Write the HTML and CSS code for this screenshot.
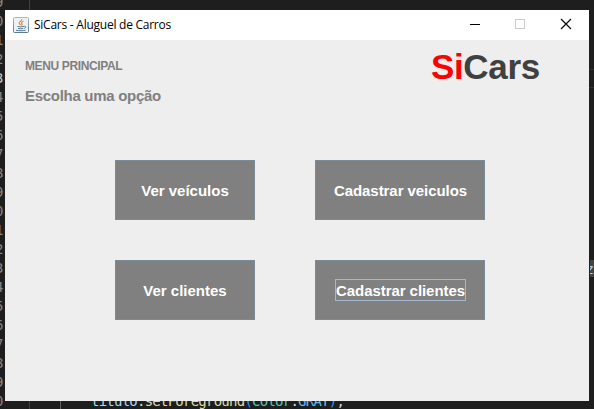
FILE: index.html
```html
<!DOCTYPE html>
<html lang="pt-BR">
<head>
<meta charset="utf-8">
<title>SiCars - Aluguel de Carros</title>
<link rel="stylesheet" href="styles.css">
</head>
<body>
<div class="desktop">
  <div class="gutter">
    <span>9</span><span>0</span><span>1</span><span>2</span><span class="current">3</span><span>4</span><span>5</span><span>6</span><span>7</span><span>8</span><span>9</span><span>0</span><span>1</span><span>2</span><span>3</span><span>4</span><span>5</span><span>6</span><span>7</span><span>8</span><span>9</span><span>0</span>
  </div>
  <div class="guide guide-outer"></div>
  <div class="guide guide-inner"></div>
  <div class="code"><span class="var">titulo</span>.<span class="fn">setForeground</span><span class="paren">(</span><span class="type">Color</span>.<span class="const">GRAY</span><span class="paren">)</span>;</div>
  <div class="active-line"></div>
  <div class="fragment">iz</div>

  <main class="window">
    <header class="titlebar">
      <svg class="app-icon" width="16" height="16" viewBox="0 0 16 16">
        <defs><linearGradient id="tile" x1="0" y1="0" x2="0" y2="1"><stop offset="0" stop-color="#a9b7c3"/><stop offset="1" stop-color="#5b7b94"/></linearGradient></defs>
        <rect x=".5" y=".5" width="15" height="15" rx="1" fill="#eef1f3" stroke="url(#tile)"/>
        <path d="M8.800 2c.6 2-3.300 2.300-2.600 4.300.3.800 1.200 1.200 1.600 2M10.500 4.200C8 5.200 8.300 6.200 9 7c.4.600.1 1.100-.5 1.500" fill="none" stroke="#ed8b36" stroke-width="1.200"/>
        <path d="M4.500 9.500c2 .5 4.500.5 6.500 0M5 11.500c2 .4 3.500.4 5.300 0M3 13.300c3 .6 7 .5 9.500 0M11.200 9.200c2.300-.5 2.200 1.700 0 2.200" fill="none" stroke="#527e9d" stroke-width="1"/>
      </svg>
      <span class="caption">SiCars - Aluguel de Carros</span>
      <svg class="controls" width="138" height="30" viewBox="0 0 138 30" fill="none" shape-rendering="crispEdges">
        <path d="M19 14.500h10" stroke="#000"/>
        <rect x="64.500" y="9.500" width="9" height="9" stroke="#ccc"/>
        <path d="M110 9l10 10M120 9l-10 10" stroke="#000" stroke-width="1.100" shape-rendering="auto"/>
      </svg>
    </header>
    <div class="content">
      <div class="top">
        <div class="headings">
          <h2>MENU PRINCIPAL</h2>
          <p>Escolha uma opção</p>
        </div>
        <h1><span>Si</span>Cars</h1>
      </div>
      <div class="menu">
        <button>Ver veículos</button>
        <button class="wide">Cadastrar veiculos</button>
        <button>Ver clientes</button>
        <button class="wide"><span class="focused">Cadastrar clientes</span></button>
      </div>
    </div>
  </main>
</div>
</body>
</html>
```

FILE: styles.css
```css
* { box-sizing: border-box; }
body { margin: 0; overflow: hidden; }
.desktop {
  position: relative;
  width: 594px;
  height: 409px;
  padding: 10px 5px 8px;
  overflow: hidden;
  background: #1e1e1e;
  color: #d4d4d4;
  font: 14px/19px "DejaVu Sans Mono", monospace;
}
.gutter {
  position: absolute;
  left: -5px;
  top: -7px;
  display: flex;
  flex-direction: column;
  color: #858585;
}
.gutter .current { color: #c6c6c6; }
.guide { position: absolute; top: 0; width: 1px; height: 409px; background: #404040; }
.guide-outer { left: 29px; }
.guide-inner { left: 60px; background: #606060; top: 401px; }
.code {
  position: absolute;
  left: 91px;
  top: 392px;
  white-space: pre;
  letter-spacing: -.76px;
}
.var { color: #9cdcfe; }
.fn { color: #dcdcaa; }
.paren { color: #179fff; }
.type { color: #4ec9b0; }
.const { color: #4fc1ff; }
.active-line { position: absolute; left: 589px; top: 69px; width: 5px; height: 19px; border: solid #303030; border-width: 1px 0; }
.fragment {
  position: absolute;
  left: 590px;
  top: 260px;
  width: 4px;
  height: 17px;
  overflow: hidden;
  background: #444;
  color: #9cdcfe;
  direction: rtl;
}
.window {
  position: relative;
  width: 584px;
  height: 391px;
  background: #eee;
  font-family: "Liberation Sans", sans-serif;
}
.titlebar { display: flex; align-items: center; height: 30px; padding-left: 8px; background: #fff; }
.caption { margin-left: 5px; color: #000; font: 12px/16px "Open Sans", sans-serif; letter-spacing: -.25px; }
.controls { margin-left: auto; }
.content { padding: 0 50px 0 20px; }
.top { display: flex; justify-content: space-between; height: 120px; }
.headings { padding-top: 16px; color: gray; font-weight: bold; }
h2 { margin: 0; font-size: 12px; line-height: 20px; letter-spacing: -.38px; }
p { margin: 10px 0 0; font-size: 15px; line-height: 20px; letter-spacing: -.29px; }
h1 { margin: 7px -1px 0 0; color: #404040; font-size: 35px; line-height: 40px; letter-spacing: -.3px; }
h1 span { color: red; }
.menu { display: grid; grid-template-columns: 140px 170px; grid-auto-rows: 60px; gap: 40px 60px; margin-left: 90px; }
button {
  display: grid;
  place-items: center;
  padding: 2px 0 0;
  border: 1px solid #7a8a99;
  background: gray;
  color: #fff;
  font: bold 15px/20px "Liberation Sans", sans-serif;
}
.wide { padding-left: 1px; letter-spacing: -.06px; }
.focused { margin-top: -3px; padding-top: 1px; line-height: 19px; outline: 1px solid #a3b8cc; }
```
